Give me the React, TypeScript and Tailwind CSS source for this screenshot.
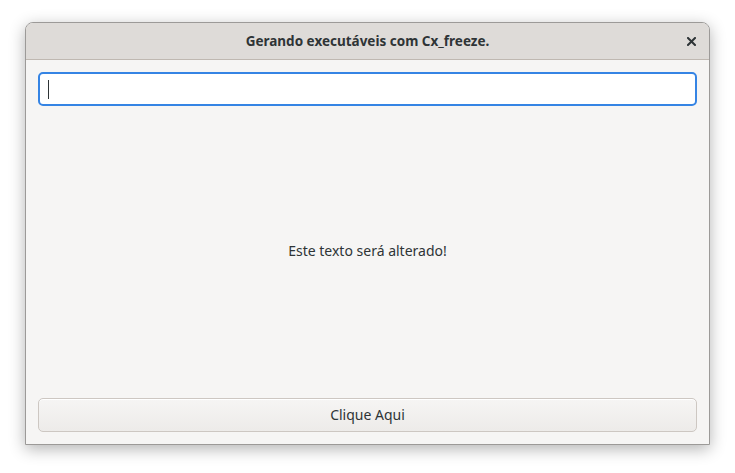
export default function App() {
  return (
    <div
      className="w-[735px] h-[473px] bg-white pl-[25px] pt-[22px]"
      style={{ fontFamily: '"Noto Sans", sans-serif' }}
    >
      <div className="w-[685px] h-[423px] flex flex-col rounded-t-[8px] border border-[#9c9a98] bg-[#f6f5f4] shadow-[0_4px_16px_rgba(0,0,0,0.3)] overflow-hidden">
        <div className="relative h-[37px] shrink-0 flex items-center justify-center bg-[#dedbd8] border-b border-[#bfb8b1]">
          <span className="text-[13.5px] font-bold text-[#2e3436]">Gerando executáveis com Cx_freeze.</span>
          <svg
            className="absolute right-[13px] top-[14px]"
            width="9"
            height="9"
            viewBox="0 0 9 9"
          >
            <path d="M1 1L8 8M8 1L1 8" stroke="#2e3436" strokeWidth="2" strokeLinecap="square" />
          </svg>
        </div>
        <div className="flex-1 flex flex-col p-[12px]">
          <div className="h-[34px] rounded-[5px] border-2 border-[#3584e4] bg-white flex items-center px-[8px]">
            <div className="w-px h-[19px] bg-[#2e3436]" />
          </div>
          <div className="flex-1 flex items-center justify-center text-[14px] text-[#2e3436] pb-[4px]">
            Este texto será alterado!
          </div>
          <button className="h-[34px] rounded-[5px] border border-[#cdc7c2] bg-gradient-to-b from-[#f6f5f4] to-[#edebe9] text-[14px] text-[#2e3436] shadow-[inset_0_1px_0_white] pb-[2px]">
            Clique Aqui
          </button>
        </div>
      </div>
    </div>
  );
}
